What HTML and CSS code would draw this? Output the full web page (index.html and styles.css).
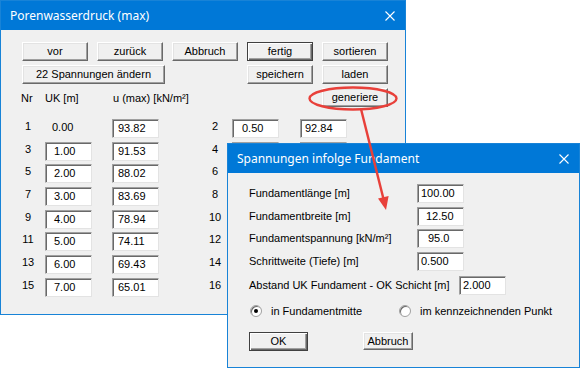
FILE: index.html
```html
<!DOCTYPE html>
<html lang="de">
<head>
<meta charset="utf-8">
<title>Porenwasserdruck (max)</title>
<link rel="stylesheet" href="styles.css">
</head>
<body>
<div class="desktop">
  <div class="win win-main">
    <div class="titlebar">
      <span class="title">Porenwasserdruck (max)</span>
      <svg class="close" width="10" height="10" viewBox="0 0 10 10"><path d="M0.5 0.5L9.5 9.5M9.5 0.5L0.5 9.5" stroke="#fff" stroke-width="1.1" fill="none"/></svg>
    </div>
    <div class="body main-body">
      <div class="btnrow">
        <button class="btn">vor</button>
        <button class="btn">zurück</button>
        <button class="btn">Abbruch</button>
        <button class="btn default">fertig</button>
        <button class="btn">sortieren</button>
      </div>
      <div class="btnrow row2">
        <button class="btn wide">22 Spannungen ändern</button>
        <button class="btn push">speichern</button>
        <button class="btn">laden</button>
      </div>
      <div class="headrow">
        <span class="h-nr">Nr</span>
        <span class="h-uk">UK [m]</span>
        <span class="h-u">u (max) [kN/m²]</span>
        <button class="btn push-gen">generiere</button>
      </div>
      <div class="grid">
        <span class="nr">1</span><span class="plain">0.00</span><span class="field fu">93.82</span>
        <span class="nr nr2">2</span><span class="field f2">0.50</span><span class="field fu2">92.84</span>

        <span class="nr">3</span><span class="field fuk">1.00</span><span class="field fu">91.53</span>
        <span class="nr nr2">4</span><span class="field f2"></span><span class="field fu2"></span>

        <span class="nr">5</span><span class="field fuk">2.00</span><span class="field fu">88.02</span>
        <span class="nr nr2">6</span><span class="field f2"></span><span class="field fu2"></span>

        <span class="nr">7</span><span class="field fuk">3.00</span><span class="field fu">83.69</span>
        <span class="nr nr2">8</span><span class="field f2"></span><span class="field fu2"></span>

        <span class="nr">9</span><span class="field fuk">4.00</span><span class="field fu">78.94</span>
        <span class="nr nr2">10</span><span class="field f2"></span><span class="field fu2"></span>

        <span class="nr">11</span><span class="field fuk">5.00</span><span class="field fu">74.11</span>
        <span class="nr nr2">12</span><span class="field f2"></span><span class="field fu2"></span>

        <span class="nr">13</span><span class="field fuk">6.00</span><span class="field fu">69.43</span>
        <span class="nr nr2">14</span><span class="field f2"></span><span class="field fu2"></span>

        <span class="nr">15</span><span class="field fuk">7.00</span><span class="field fu">65.01</span>
        <span class="nr nr2">16</span><span class="field f2"></span><span class="field fu2"></span>
      </div>
    </div>
  </div>

  <div class="win win-sub">
    <div class="titlebar">
      <span class="title">Spannungen infolge Fundament</span>
      <svg class="close" width="10" height="10" viewBox="0 0 10 10"><path d="M0.5 0.5L9.5 9.5M9.5 0.5L0.5 9.5" stroke="#fff" stroke-width="1.1" fill="none"/></svg>
    </div>
    <div class="body sub-body">
      <div class="form">
        <span class="lbl">Fundamentlänge [m]</span><span class="field p3">100.00</span>
        <span class="lbl">Fundamentbreite [m]</span><span class="field p8">12.50</span>
        <span class="lbl">Fundamentspannung [kN/m²]</span><span class="field p10">95.0</span>
        <span class="lbl">Schrittweite (Tiefe) [m]</span><span class="field p3">0.500</span>
      </div>
      <div class="abstand">
        <span class="lbl">Abstand UK Fundament - OK Schicht [m]</span><span class="field p3">2.000</span>
      </div>
      <div class="radios">
        <span class="radio checked"></span><span class="rlabel r1">in Fundamentmitte</span>
        <span class="radio"></span><span class="rlabel">im kennzeichnenden Punkt</span>
      </div>
      <div class="subbtns">
        <button class="btn default ok">OK</button>
        <button class="btn abb">Abbruch</button>
      </div>
    </div>
  </div>

  <svg class="annot" width="580" height="368" viewBox="0 0 580 368">
    <ellipse cx="353" cy="98.5" rx="43.5" ry="11" fill="none" stroke="#e8403a" stroke-width="2.4"/>
    <line x1="361" y1="109" x2="383.5" y2="199" stroke="#e8403a" stroke-width="2.4"/>
    <polygon points="386,210 378,198.4 388.6,196" fill="#e8403a"/>
  </svg>
</div>
</body>
</html>
```

FILE: styles.css
```css
* { box-sizing: border-box; }
html, body { margin: 0; padding: 0; background: #fff; }
body {
  font-family: "Liberation Sans", Arial, sans-serif;
  font-size: 11px;
  color: #000;
}
.desktop { position: relative; width: 580px; height: 368px; overflow: hidden; }

.win {
  position: absolute;
  display: flex;
  flex-direction: column;
  border: 1px solid #1883d7;
  background: #f0f0f0;
}
.win-main { left: 0; top: 0; width: 406px; height: 315px; }
.win-sub { left: 227px; top: 143px; width: 353px; height: 225px; }

.titlebar {
  height: 29px;
  background: #0078d7;
  color: #fff;
  display: flex;
  align-items: center;
  justify-content: space-between;
  padding: 0 10px 0 9px;
  flex: none;
}
.title {
  font-family: "Noto Sans", "Open Sans", sans-serif;
  font-size: 12px;
}
.close { display: block; }

.body { flex: 1; }

/* buttons */
.btn {
  font: inherit;
  color: #000;
  height: 19px;
  width: 66px;
  padding: 0;
  margin: 0;
  background: #f0f0f0;
  border: 1px solid;
  border-color: #fff #696969 #696969 #fff;
  box-shadow: inset -1px -1px 0 #a0a0a0, inset 1px 1px 0 #e3e3e3;
  line-height: 15px;
}
.btn.default {
  border: 1px solid #404040;
  box-shadow: inset 1px 1px 0 #fff, inset -1px -1px 0 #696969, inset -2px -2px 0 #a0a0a0;
}

.main-body { padding: 12px 0 0 13px; }
.btnrow { display: flex; gap: 9px; padding-left: 8px; }
.row2 { margin-top: 4px; }
.btn.wide { width: 143px; }
.btn.push { margin-left: 73px; }

.headrow {
  margin-top: 4px;
  height: 19px;
  display: flex;
  align-items: center;
}
.h-nr { margin-left: 7px; width: 24px; }
.h-uk { width: 68px; }
.h-u { width: 209px; }

.grid {
  margin-top: 12px;
  display: grid;
  grid-template-columns: 31px 67px 88px 32px 68px 47px;
  grid-auto-rows: 19px;
  row-gap: 3.7px;
}
.nr {
  width: 28px;
  text-align: center;
  line-height: 15px;
}
.nr2 { width: 30px; }
.plain { padding-left: 7px; line-height: 17px; }

.field {
  display: block;
  width: 47px;
  height: 19px;
  background: #fff;
  border: 1px solid;
  border-color: #a0a0a0 #e3e3e3 #e3e3e3 #a0a0a0;
  box-shadow: inset 1px 1px 0 #696969;
  line-height: 17px;
  white-space: nowrap;
}
.fuk { padding-left: 8px; }
.fu { padding-left: 5px; }
.f2 { padding-left: 9px; }
.fu2 { padding-left: 4px; }

/* sub dialog */
.sub-body { padding: 11px 0 0 21px; }
.form {
  display: grid;
  grid-template-columns: 168px 47px;
  grid-auto-rows: 19px;
  row-gap: 3.7px;
  align-items: center;
}
.lbl { line-height: 17px; }
.p3 { padding-left: 3px; }
.p8 { padding-left: 8px; }
.p10 { padding-left: 10px; }

.abstand {
  margin-top: 5px;
  display: flex;
  align-items: center;
  height: 19px;
}
.abstand .lbl { width: 210px; }

.radios {
  margin-top: 9px;
  display: flex;
  align-items: center;
  height: 13px;
}
.radio {
  flex: none;
  width: 12px;
  height: 12px;
  border-radius: 50%;
  background: #fff;
  border: 1px solid #a0a0a0;
  box-shadow: inset 1px 1px 0 #696969;
  margin-left: 1px;
  position: relative;
}
.radio.checked::after {
  content: "";
  position: absolute;
  left: 3px;
  top: 3px;
  width: 4px;
  height: 4px;
  border-radius: 50%;
  background: #000;
}
.rlabel { margin-left: 9px; white-space: nowrap; }
.rlabel.r1 { width: 127px; }

.subbtns {
  margin-top: 15px;
  display: flex;
  gap: 55px;
}
.btn.ok { width: 59px; height: 19px; }
.btn.abb { width: 50px; height: 18px; }

.annot {
  position: absolute;
  left: 0;
  top: 0;
  pointer-events: none;
}
```
